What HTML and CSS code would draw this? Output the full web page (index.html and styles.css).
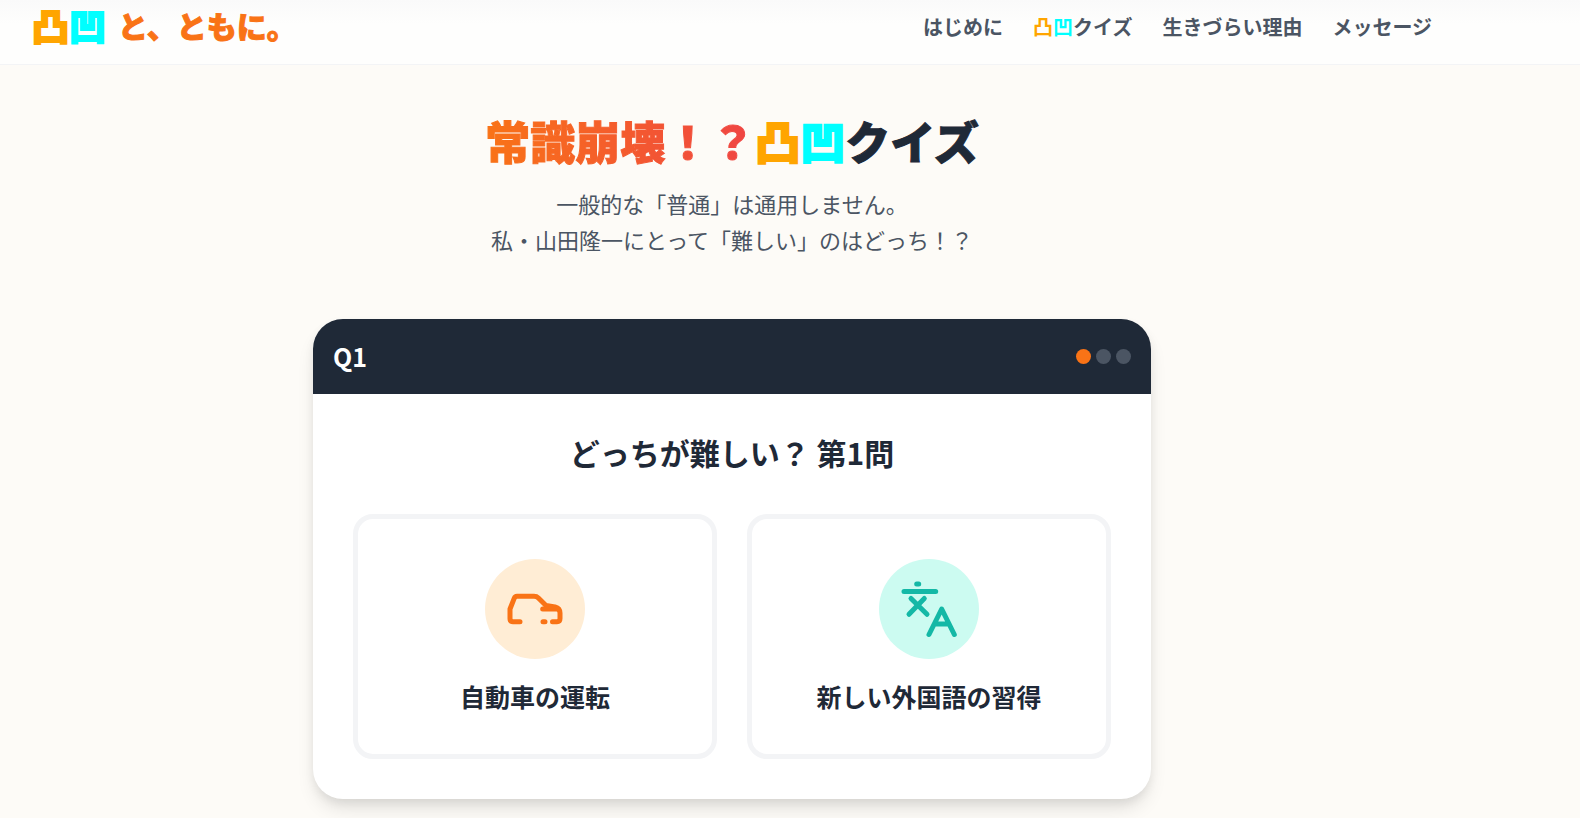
FILE: index.html
```html
<!DOCTYPE html>
<html lang="ja">
<head>
  <meta charset="UTF-8">
  <meta name="viewport" content="width=device-width, initial-scale=1.0">
  <title>凸凹 と、ともに。</title>
  <link rel="stylesheet" href="styles.css">
</head>
<body>
  <header class="site-header">
    <div class="header-inner">
      <a href="#" class="logo"><span class="logo-mark"><span class="deko">凸</span><span class="boko">凹</span></span><span>と、ともに。</span></a>
      <nav class="nav">
        <a href="#intro">はじめに</a>
        <a href="#quiz"><span class="deko">凸</span><span class="boko">凹</span>クイズ</a>
        <a href="#reason">生きづらい理由</a>
        <a href="#message">メッセージ</a>
      </nav>
    </div>
  </header>

  <main class="quiz" id="quiz">
    <h1 class="quiz-title"><span class="gradient">常識崩壊！？</span><span class="deko">凸</span><span class="boko">凹</span>クイズ</h1>
    <p class="quiz-lead">一般的な「普通」は通用しません。<br>私・山田隆一にとって「難しい」のはどっち！？</p>

    <section class="card">
      <div class="card-head">
        <span class="card-number">Q1</span>
        <div class="dots">
          <span class="dot active"></span>
          <span class="dot"></span>
          <span class="dot"></span>
        </div>
      </div>
      <div class="card-body">
        <h2 class="question">どっちが難しい？ 第1問</h2>
        <div class="options">
          <button type="button" class="option">
            <span class="option-icon orange">
              <svg viewBox="0 0 60 60" aria-hidden="true">
                <path d="M15 42.7H8Q5 42.7 5 39.5V30L9.2 19.3Q10 17.3 12 17.3H29Q31.7 17.3 33.4 19L41 26.5L50 28Q55 29.5 55 34V39.5Q55 42.7 52 42.7H47.5"/>
                <path d="M37.7 30H53M38 42.7H40"/>
              </svg>
            </span>
            <span class="option-label">自動車の運転</span>
          </button>
          <button type="button" class="option">
            <span class="option-icon teal">
              <svg viewBox="0 0 60 60" aria-hidden="true">
                <path d="M5 12.5H36.7M17.7 5H19.7M12 19.5L28 35.3M25.3 19.5L10 35.3"/>
                <path d="M30 55.5L42.7 30L55.3 55.5M35.5 45H50"/>
              </svg>
            </span>
            <span class="option-label">新しい外国語の習得</span>
          </button>
        </div>
      </div>
    </section>
  </main>
</body>
</html>
```
FILE: styles.css
```css
* { box-sizing: border-box; }
body { margin: 0; background: #fdfbf7; color: #1f2937; font-family: 'M PLUS Rounded 1c', 'Noto Sans CJK JP', sans-serif; }
a { color: inherit; text-decoration: none; }
.deko { color: #ffa500; }
.boko { color: #00ffff; }

.site-header { background: linear-gradient(#fafafa, #fefefd 24px); border-bottom: 1px solid #f3f4f6; }
.header-inner { display: flex; justify-content: space-between; align-items: center; max-width: 1464px; height: 64px; padding: 0 32px 10px; }
.logo { display: flex; align-items: center; gap: 12px; padding-bottom: 4px; font-size: 30px; line-height: 40px; font-weight: 900; color: #f97316; white-space: nowrap; -webkit-text-stroke: 1px; }
.logo-mark { font-size: 37px; }
.nav { display: flex; gap: 30px; font-size: 20px; line-height: 30px; font-weight: 700; color: #4b5563; white-space: nowrap; }
.nav a:hover { color: #f97316; }

.quiz { max-width: 1464px; padding: 46px 20px 60px; text-align: center; }
.quiz-title { margin: 0 0 14px; font-size: 45px; line-height: 60px; font-weight: 900; -webkit-text-stroke: 1px; }
.quiz-title .deko, .quiz-title .boko, .logo-mark { -webkit-text-stroke: 2px; }
.gradient { background: linear-gradient(to right, #f97316, #ef4444); -webkit-background-clip: text; background-clip: text; color: transparent; }
.quiz-lead { margin: 0 0 62px; font-size: 22px; line-height: 36px; font-weight: 400; color: #4b5563; }

.card { max-width: 838px; margin: 0 auto; background: #fff; border-radius: 30px; overflow: hidden; box-shadow: 0 12px 20px -4px rgba(0,0,0,0.12), 0 4px 10px rgba(0,0,0,0.06); }
.card-head { display: flex; justify-content: space-between; align-items: center; padding: 20px; background: #1f2937; color: #fff; }
.card-number { font-size: 25px; line-height: 35px; font-weight: 700; }
.dots { display: flex; gap: 5px; }
.dot { width: 15px; height: 15px; border-radius: 50%; background: #4b5563; }
.dot.active { background: #f97316; }
.card-body { padding: 38px 40px 40px; }
.question { margin: 0 0 42px; font-size: 30px; line-height: 40px; font-weight: 700; }

.options { display: grid; grid-template-columns: 1fr 1fr; gap: 30px; }
.option { display: flex; flex-direction: column; align-items: center; gap: 20px; padding: 40px; background: #fff; border: 5px solid #f3f4f6; border-radius: 20px; font-family: inherit; color: inherit; cursor: pointer; }
.option:hover { border-color: #f97316; }
.option-icon { display: flex; align-items: center; justify-content: center; width: 100px; height: 100px; border-radius: 50%; }
.option-icon svg { width: 60px; height: 60px; fill: none; stroke: currentColor; stroke-width: 5; stroke-linecap: round; stroke-linejoin: round; }
.orange { background: #ffedd5; color: #f97316; }
.teal { background: #ccfbf1; color: #14b8a6; }
.option-label { font-size: 25px; line-height: 35px; font-weight: 700; white-space: nowrap; }

@media (max-width: 800px) {
  .header-inner { flex-direction: column; height: auto; padding: 10px; }
  .nav { flex-wrap: wrap; justify-content: center; gap: 10px 20px; }
  .options { grid-template-columns: 1fr; }
  .option { padding: 30px 10px; }
}
```
